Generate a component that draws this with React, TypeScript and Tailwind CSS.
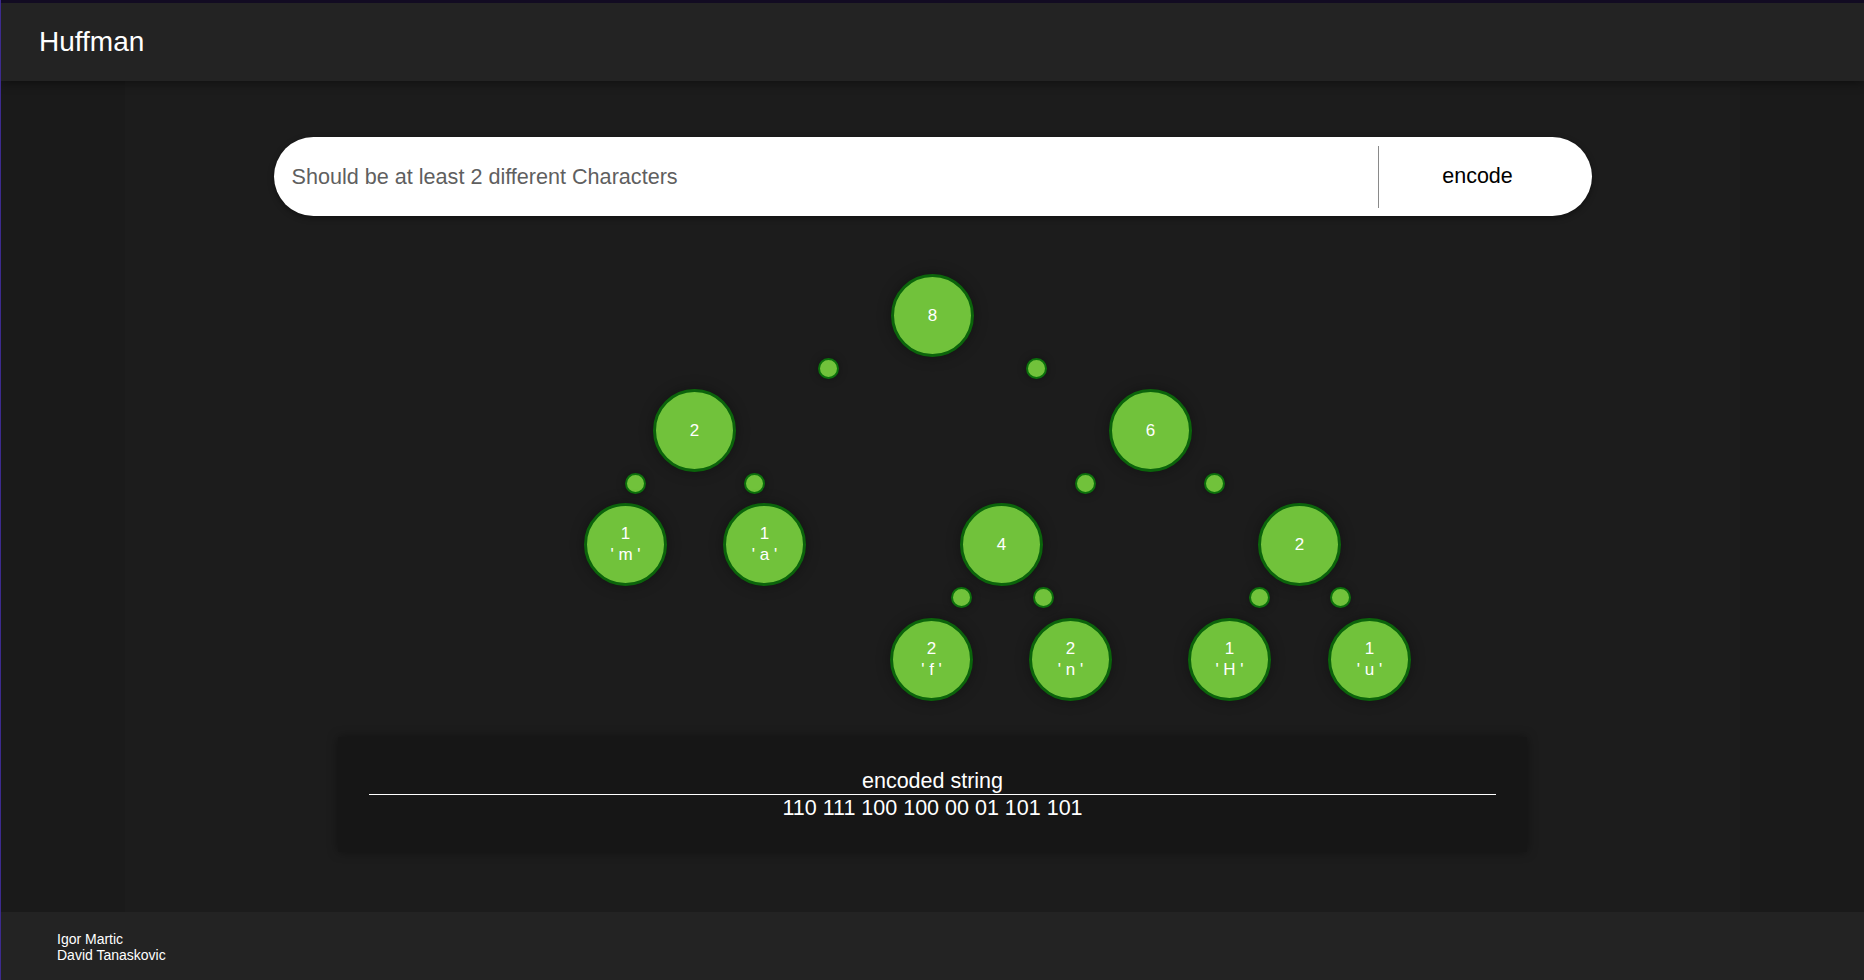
import React from 'react';

type TreeNode = { x: number; y: number; weight: number; char?: string };
type Dot = { x: number; y: number };

// positions relative to the root's centre
const nodes: TreeNode[] = [
   { x: 0, y: 0, weight: 8 },
   { x: -238, y: 115, weight: 2 },
   { x: 218, y: 115, weight: 6 },
   { x: -307, y: 229, weight: 1, char: 'm' },
   { x: -168, y: 229, weight: 1, char: 'a' },
   { x: 69, y: 229, weight: 4 },
   { x: 367, y: 229, weight: 2 },
   { x: -1, y: 344, weight: 2, char: 'f' },
   { x: 138, y: 344, weight: 2, char: 'n' },
   { x: 297, y: 344, weight: 1, char: 'H' },
   { x: 437, y: 344, weight: 1, char: 'u' },
];

const dots: Dot[] = [
   { x: -104, y: 53 }, { x: 104, y: 53 },
   { x: -297, y: 168 }, { x: -178, y: 168 },
   { x: 153, y: 168 }, { x: 282, y: 168 },
   { x: 29, y: 282 }, { x: 111, y: 282 },
   { x: 327, y: 282 }, { x: 408, y: 282 },
];

const ROOT_X = 500;
const ROOT_Y = 42;

const Tree: React.FC = () => (
   <div className="relative w-[1000px] h-[428px] mx-auto">
      {dots.map((d, i) => (
         <div
            key={i}
            className="absolute w-[21px] h-[21px] rounded-full bg-[#71c23b] border-2 border-[#0c700c] shadow-[0_0_8px_rgba(0,0,0,0.35)]"
            style={{ left: ROOT_X + d.x - 10.5, top: ROOT_Y + d.y - 10.5 }}
         />
      ))}
      {nodes.map((n, i) => (
         <div
            key={i}
            className="absolute w-[83px] h-[83px] rounded-full bg-[#71c23b] border-[3px] border-[#0b640b] shadow-[0_0_14px_rgba(0,0,0,0.35)] flex flex-col items-center justify-center text-white text-[17px] leading-[21px]"
            style={{ left: ROOT_X + n.x - 41.5, top: ROOT_Y + n.y - 41.5 }}
         >
            <span>{n.weight}</span>
            {n.char && <span className="whitespace-pre">{`' ${n.char} '`}</span>}
         </div>
      ))}
   </div>
);

const App: React.FC = () => {
   return (
      <div className="h-screen flex flex-col bg-[#1a1a1a] border-l border-[#3d2b8e] font-['Liberation_Sans',Arial,sans-serif] overflow-hidden">
         <header className="relative z-10 h-[81px] shrink-0 border-t-[3px] border-[#120b22] bg-[#232323] flex items-center pl-[38px] shadow-[0_2px_10px_rgba(0,0,0,0.45)]">
            <h1 className="text-white text-[28px]">Huffman</h1>
         </header>

         <main className="flex-1 flex">
            <div className="w-[1615px] mx-auto bg-[#1c1c1c] pt-[56px]">
               <div className="w-[1318px] h-[79px] mx-auto bg-white rounded-full flex items-center shadow-[0_2px_6px_rgba(0,0,0,0.4)]">
                  <input
                     className="flex-1 h-full bg-transparent pl-[18px] text-[21.6px] text-[#333] placeholder:text-[#5f5f5f] outline-none"
                     placeholder="Should be at least 2 different Characters"
                  />
                  <div className="w-px h-[62px] bg-[#8a8a8a]" />
                  <button className="w-[213px] h-full pr-[15px] text-[21.5px] text-black">encode</button>
               </div>

               <div className="mt-[57px]">
                  <Tree />
               </div>

               <div className="mt-[36px] w-[1189px] mx-auto bg-[#161616] px-[31px] py-[31px] text-center text-white text-[21.5px] leading-[26px] shadow-[0_0_10px_rgba(0,0,0,0.4)]">
                  <p>encoded string</p>
                  <div className="border-t border-white" />
                  <p>110 111 100 100 00 01 101 101</p>
               </div>
            </div>
         </main>

         <footer className="h-[68px] shrink-0 bg-[#232323] pl-[56px] pt-[19px] text-white text-[14px] leading-[16px]">
            <p>Igor Martic</p>
            <p>David Tanaskovic</p>
         </footer>
      </div>
   );
};

export default App;
